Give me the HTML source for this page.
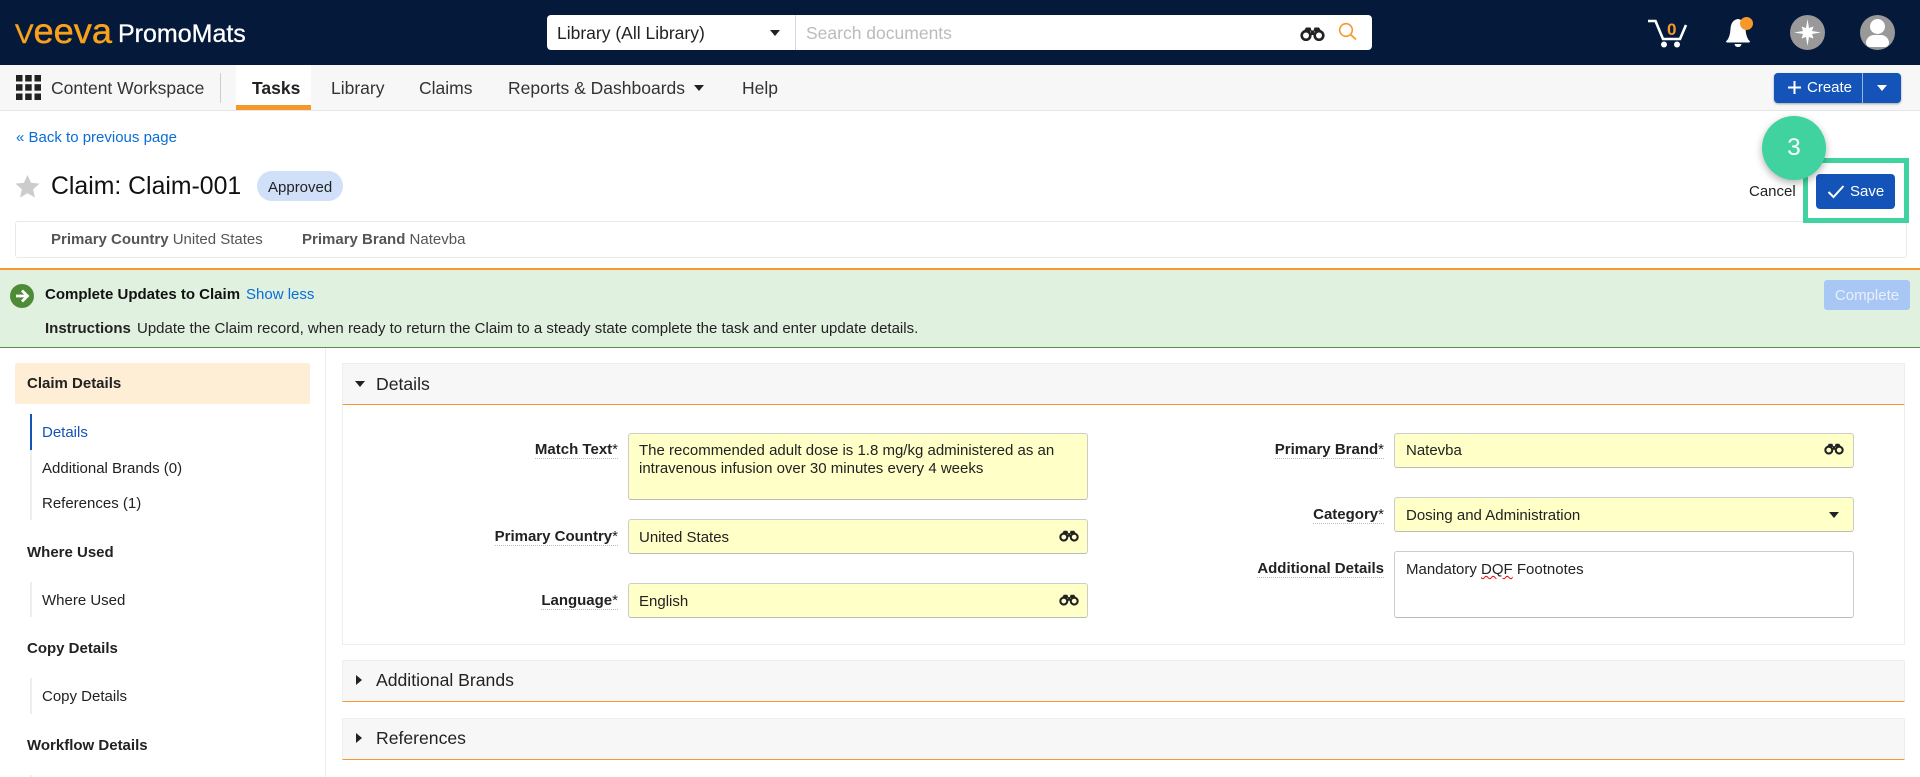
<!DOCTYPE html>
<html lang="en"><head><meta charset="utf-8"><title>Claim: Claim-001</title>
<style>
*{box-sizing:border-box}
html,body{margin:0;padding:0}
body{width:1920px;height:777px;overflow:hidden;position:relative;background:#fff;font-family:"Liberation Sans",Arial,sans-serif;color:#222}
.b,.t,svg{position:absolute}
.t{white-space:nowrap;line-height:20px;font-size:15px}
.n{font-size:17.500px;color:#333}
.bold{font-weight:700}
.l{color:#0a6dd6}
.h{font-size:17.600px;color:#222}
.lab{font-weight:700;text-align:right;line-height:17px;border-bottom:1px dotted #bbb;color:#222}
.lab span{font-weight:400}
.f{position:absolute;background:#ffffc8;border:1px solid #ccc;border-bottom:1px solid #bbb;border-radius:3px}
.bar{position:absolute;left:30px;width:2px;background:#eee}
.tri{position:absolute;width:0;height:0;border-left:5px solid transparent;border-right:5px solid transparent;border-top:6px solid #222}
.tr{position:absolute;width:0;height:0;border-top:5px solid transparent;border-bottom:5px solid transparent;border-left:6px solid #222}
.p{position:absolute;left:342px;width:1563px;background:#f7f7f7;border:1px solid #eee;border-bottom:1px solid #f7982a;border-radius:2px 2px 0 0}
</style></head><body>
<svg width="0" height="0" style="position:absolute"><defs>
<symbol id="bin" viewBox="0 0 25 15"><circle cx="6" cy="9.500" r="4.300" fill="none" stroke="#222" stroke-width="2.600"/><circle cx="19" cy="9.500" r="4.300" fill="none" stroke="#222" stroke-width="2.600"/><path d="M2.500 7L6 1.500H10.500L11.500 4.500H13.500L14.500 1.500H19L22.500 7L18 5.500H14V9H11V5.500H7Z" fill="#222"/></symbol>
</defs></svg>

<div class="b" style="left:0;top:0;width:1920px;height:65px;background:#051a3a"></div>
<svg style="left:15px;top:16px" width="100" height="32" viewBox="0 0 100 32"><text transform="translate(0,27) scale(1,1.35)" font-family="Liberation Sans" font-size="26" fill="#f9a11b" stroke="#f9a11b" stroke-width=".3" textLength="97" lengthAdjust="spacingAndGlyphs"><tspan font-size="20">V</tspan>eeva</text></svg>
<div class="t" style="left:118px;top:21px;font-size:25px;line-height:27px;color:#fff;-webkit-text-stroke:.3px #fff">PromoMats</div>

<div class="b" style="left:547px;top:15px;width:825px;height:35px;background:#fff;border-radius:4px"></div>
<div class="b" style="left:795px;top:15px;width:1px;height:35px;background:#d5d8e4"></div>
<div class="t" style="left:557px;top:23px;font-size:17.500px;color:#222">Library (All Library)</div>
<div class="tri" style="left:770px;top:30px"></div>
<div class="t" style="left:806px;top:23px;font-size:17.500px;color:#bbb">Search documents</div>
<svg style="left:1300px;top:26px" width="25" height="15"><use href="#bin" width="25" height="15"/></svg>
<svg style="left:1338px;top:22px" width="19" height="19" viewBox="0 0 19 19"><circle cx="8" cy="8" r="6.300" fill="none" stroke="#f7982a" stroke-width="1.600"/><path d="M12.500 12.500L18 17.500" stroke="#f7982a" stroke-width="1.800" fill="none"/></svg>

<svg style="left:1646px;top:18px" width="42" height="32" viewBox="0 0 42 32"><path d="M2 3H9.500L17 21H34L40 7" fill="none" stroke="#fff" stroke-width="2.600"/><circle cx="18" cy="26.500" r="3" fill="#fff"/><circle cx="31" cy="26.500" r="3" fill="#fff"/></svg>
<div class="t bold" style="left:1667px;top:20px;font-size:17px;color:#f7982a">0</div>
<svg style="left:1724px;top:16px" width="30" height="32" viewBox="0 0 30 32"><path d="M2 25.500Q6 22 6.500 13Q7 4 14 3Q21 4 21.500 13Q22 22 26 25.500Q26 26.500 24 26.500H4Q2 26.500 2 25.500Z" fill="#fff"/><path d="M10.500 28H17.500Q17 31 14 31Q11 31 10.500 28Z" fill="#fff"/></svg>
<div class="b" style="left:1740px;top:17px;width:13px;height:13px;border-radius:50%;background:#f7982a"></div>
<div class="b" style="left:1790px;top:15px;width:35px;height:35px;border-radius:50%;background:#999"></div>
<svg style="left:1792px;top:17px" width="31" height="31" viewBox="0 0 31 31"><path d="M15.500 2L17 11L21.500 9.500L20 14L29 15.500L20 17L21.500 21.500L17 20L15.500 29L14 20L9.500 21.500L11 17L2 15.500L11 14L9.500 9.500L14 11Z" fill="#fff"/></svg>
<div class="b" style="left:1860px;top:15px;width:35px;height:35px;border-radius:50%;background:#999;overflow:hidden">
<div class="b" style="left:10px;top:4px;width:15px;height:15px;border-radius:50%;background:#fff"></div>
<div class="b" style="left:6px;top:20px;width:23px;height:12px;border-radius:8px 8px 4px 4px;background:#fff"></div></div>

<div class="b" style="left:0;top:65px;width:1920px;height:46px;background:#f7f7f7;border-bottom:1px solid #e6e6e6"></div>
<svg style="left:16px;top:75px" width="25" height="25" fill="#222"><rect width="6.500" height="6.500"/><rect x="9.200" width="6.500" height="6.500"/><rect x="18.500" width="6.500" height="6.500"/><rect y="9.200" width="6.500" height="6.500"/><rect x="9.200" y="9.200" width="6.500" height="6.500"/><rect x="18.500" y="9.200" width="6.500" height="6.500"/><rect y="18.500" width="6.500" height="6.500"/><rect x="9.200" y="18.500" width="6.500" height="6.500"/><rect x="18.500" y="18.500" width="6.500" height="6.500"/></svg>
<div class="t n" style="left:51px;top:78px">Content Workspace</div>
<div class="b" style="left:220px;top:73px;width:1px;height:30px;background:#ccc"></div>
<div class="b" style="left:236px;top:65px;width:75px;height:45px;background:#fff;border-bottom:5px solid #f7982a"></div>
<div class="t n bold" style="left:252px;top:78px;color:#222">Tasks</div>
<div class="t n" style="left:331px;top:78px">Library</div>
<div class="t n" style="left:419px;top:78px">Claims</div>
<div class="t n" style="left:508px;top:78px">Reports &amp; Dashboards</div>
<div class="tri" style="left:694px;top:85px"></div>
<div class="t n" style="left:742px;top:78px">Help</div>
<div class="b" style="left:1774px;top:73px;width:127px;height:30px;background:#1453b8;border-radius:4px;box-shadow:0 1px 2px rgba(0,0,0,.35)"></div>
<div class="b" style="left:1862px;top:73px;width:1px;height:30px;background:#9ab5e0"></div>
<svg style="left:1787px;top:80px" width="15" height="15"><path d="M7.500 1V14M1 7.500H14" stroke="#fff" stroke-width="2"/></svg>
<div class="t" style="left:1807px;top:78px;color:#fff">Create</div>
<div class="tri" style="left:1877px;top:85px;border-top-color:#fff;border-left-width:5.500px;border-right-width:5.500px"></div>

<div class="t l" style="left:16px;top:128px">« Back to previous page</div>
<svg style="left:15px;top:174px" width="25" height="24" viewBox="0 0 27 26"><path d="M13.500 1L17.300 9.500L26.500 10.400L19.600 16.600L21.600 25.500L13.500 20.800L5.400 25.500L7.400 16.600L.5 10.400L9.700 9.500Z" fill="#ccc"/></svg>
<div class="t" style="left:51px;top:172px;font-size:24.800px;line-height:30px;color:#111">Claim: Claim-001</div>
<div class="b" style="left:257px;top:171px;width:86px;height:30px;background:#d0e0f9;border-radius:15px"></div>
<div class="t" style="left:268px;top:178px;color:#222">Approved</div>
<div class="t" style="left:1749px;top:182px;color:#222">Cancel</div>
<div class="b" style="left:15px;top:221px;width:1892px;height:37px;border:1px solid #eaeaea;border-radius:3px"></div>
<div class="t" style="left:51px;top:230px;color:#555"><b>Primary Country</b> United States</div>
<div class="t" style="left:302px;top:230px;color:#555"><b>Primary Brand</b> Natevba</div>

<div class="b" style="left:1816px;top:174px;width:79px;height:35px;background:#1453b8;border-radius:4px"></div>
<svg style="left:1827px;top:184px" width="18" height="16"><path d="M1.500 8L6.500 13L16.500 2" fill="none" stroke="#fff" stroke-width="2"/></svg>
<div class="t" style="left:1850px;top:182px;color:#fff">Save</div>
<div class="b" style="left:1803px;top:158px;width:106px;height:65px;border:5px solid #40d39f"></div>
<div class="b" style="left:1762px;top:116px;width:64px;height:64px;border-radius:50%;background:#40d39f;box-shadow:0 3px 8px rgba(0,0,0,.3)"></div>
<div class="t" style="left:1762px;top:133px;width:64px;text-align:center;font-size:24.500px;line-height:30px;color:#fff">3</div>

<div class="b" style="left:0;top:268px;width:1920px;height:80px;background:#e0f1e0;border-top:2px solid #f7982a;border-bottom:1px solid #5a8f45"></div>
<div class="b" style="left:10px;top:284px;width:24px;height:24px;border-radius:50%;background:#4d8b36"></div>
<svg style="left:10px;top:284px" width="24" height="24"><path d="M6 12H17M12 6.500L17.500 12L12 17.500" fill="none" stroke="#fff" stroke-width="2.800"/></svg>
<div class="t bold" style="left:45px;top:285px;color:#111">Complete Updates to Claim</div>
<div class="t l" style="left:246px;top:285px">Show less</div>
<div class="t bold" style="left:45px;top:319px">Instructions</div>
<div class="t" style="left:137px;top:319px">Update the Claim record, when ready to return the Claim to a steady state complete the task and enter update details.</div>
<div class="b" style="left:1824px;top:280px;width:86px;height:30px;background:#a9c7f5;border-radius:3px"></div>
<div class="t" style="left:1824px;top:286px;width:86px;text-align:center;color:#e8f0fc">Complete</div>

<div class="b" style="left:325px;top:348px;width:1px;height:429px;background:#eee"></div>
<div class="b" style="left:15px;top:363px;width:295px;height:41px;background:#ffeed6;border-radius:2px"></div>
<div class="t bold" style="left:27px;top:374px;color:#222">Claim Details</div>
<div class="bar" style="top:414px;height:106px"></div>
<div class="bar" style="top:414px;height:36px;background:#1453b8"></div>
<div class="t" style="left:42px;top:423px;color:#1453b8">Details</div>
<div class="t" style="left:42px;top:459px">Additional Brands (0)</div>
<div class="t" style="left:42px;top:494px">References (1)</div>
<div class="t bold" style="left:27px;top:543px">Where Used</div>
<div class="bar" style="top:582px;height:35px"></div>
<div class="t" style="left:42px;top:591px">Where Used</div>
<div class="t bold" style="left:27px;top:639px">Copy Details</div>
<div class="bar" style="top:678px;height:36px"></div>
<div class="t" style="left:42px;top:687px">Copy Details</div>
<div class="t bold" style="left:27px;top:736px">Workflow Details</div>
<div class="bar" style="top:775px;height:2px"></div>

<div class="b" style="left:342px;top:363px;width:1563px;height:282px;border:1px solid #eee"></div>
<div class="p" style="top:363px;height:42px"></div>
<div class="tri" style="left:355px;top:381px"></div>
<div class="t h" style="left:376px;top:374px">Details</div>
<div class="p" style="top:660px;height:42px"></div>
<div class="tr" style="left:356px;top:675px"></div>
<div class="t h" style="left:376px;top:670px">Additional Brands</div>
<div class="p" style="top:718px;height:42px"></div>
<div class="tr" style="left:356px;top:733px"></div>
<div class="t h" style="left:376px;top:728px">References</div>

<div class="t lab" style="right:1302px;top:441px">Match Text<span>*</span></div>
<div class="t lab" style="right:1302px;top:528px">Primary Country<span>*</span></div>
<div class="t lab" style="right:1302px;top:592px">Language<span>*</span></div>
<div class="t lab" style="right:536px;top:441px">Primary Brand<span>*</span></div>
<div class="t lab" style="right:536px;top:506px">Category<span>*</span></div>
<div class="t lab" style="right:536px;top:560px">Additional Details</div>

<div class="f" style="left:628px;top:433px;width:460px;height:67px"></div>
<div class="t" style="left:639px;top:442px;line-height:18px">The recommended adult dose is 1.8 mg/kg administered as an<br>intravenous infusion over 30 minutes every 4 weeks</div>
<div class="f" style="left:628px;top:519px;width:460px;height:35px"></div>
<div class="t" style="left:639px;top:528px">United States</div>
<svg style="left:1059px;top:529px" width="20" height="13"><use href="#bin" width="20" height="13"/></svg>
<div class="f" style="left:628px;top:583px;width:460px;height:35px"></div>
<div class="t" style="left:639px;top:592px">English</div>
<svg style="left:1059px;top:593px" width="20" height="13"><use href="#bin" width="20" height="13"/></svg>
<div class="f" style="left:1394px;top:433px;width:460px;height:35px"></div>
<div class="t" style="left:1406px;top:441px">Natevba</div>
<svg style="left:1824px;top:442px" width="20" height="13"><use href="#bin" width="20" height="13"/></svg>
<div class="f" style="left:1394px;top:497px;width:460px;height:35px"></div>
<div class="t" style="left:1406px;top:506px">Dosing and Administration</div>
<div class="tri" style="left:1829px;top:512px"></div>
<div class="f" style="left:1394px;top:551px;width:460px;height:67px;background:#fff"></div>
<div class="t" style="left:1406px;top:560px">Mandatory <span style="text-decoration:underline wavy #e00;text-decoration-thickness:1px">DQF</span> Footnotes</div>
</body></html>
